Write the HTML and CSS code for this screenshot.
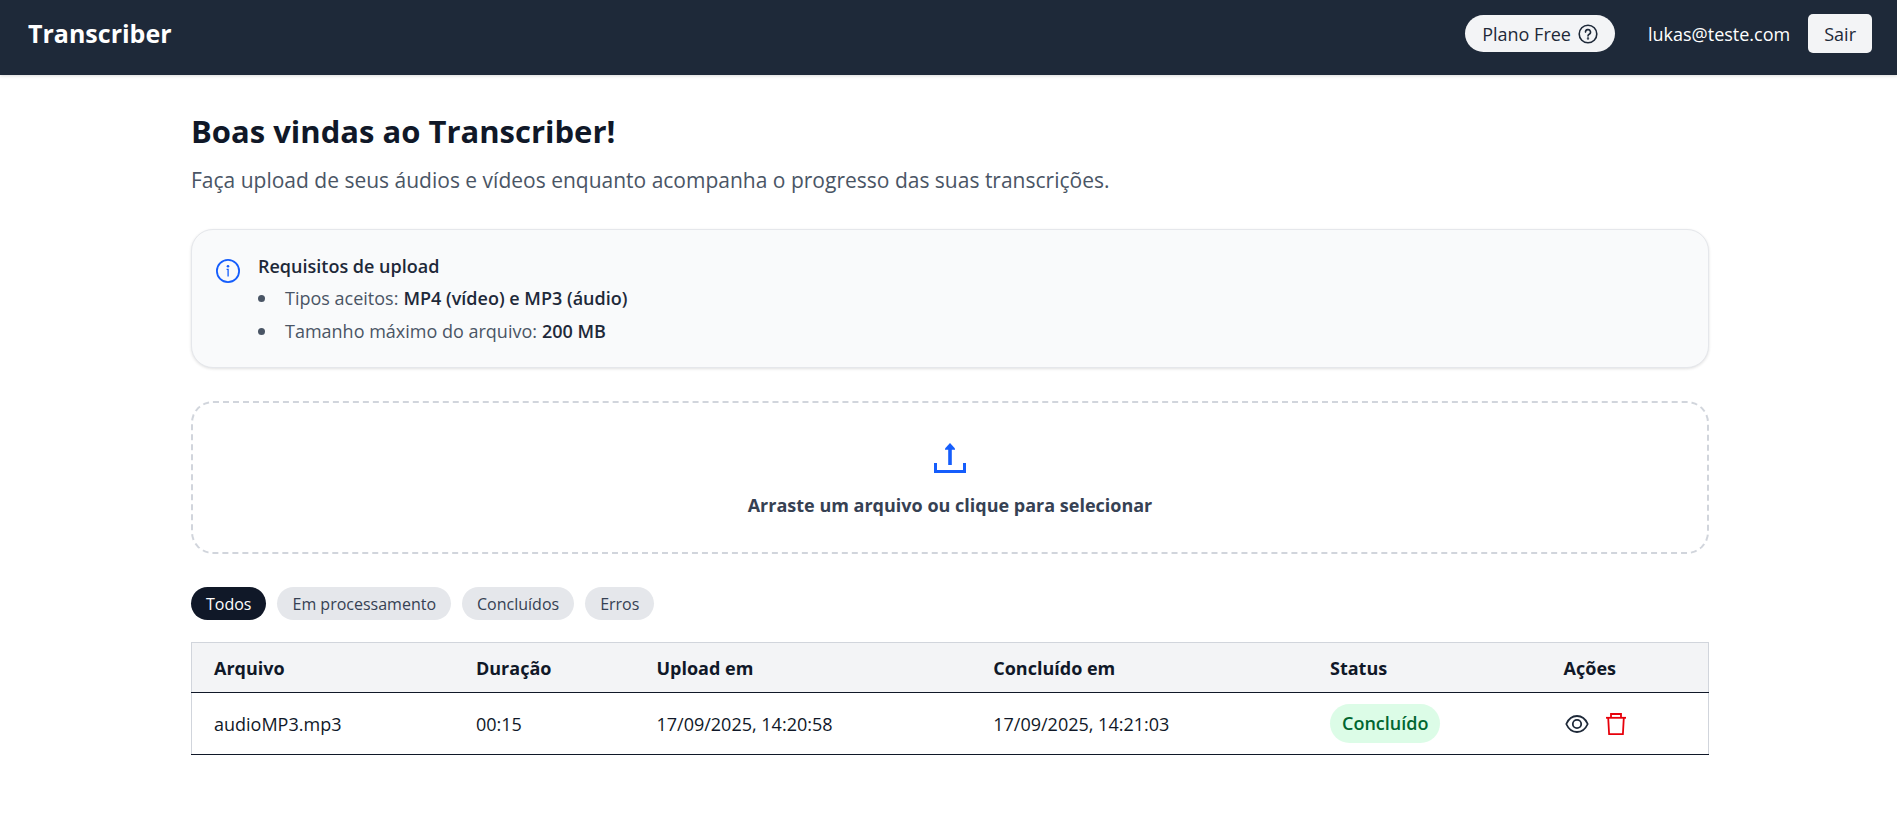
FILE: index.html
```html
<!DOCTYPE html>
<html lang="pt-BR">
<head>
<meta charset="utf-8">
<title>Transcriber</title>
<link rel="stylesheet" href="styles.css">
</head>
<body>
<header class="topbar">
  <div class="brand">Transcriber</div>
  <div class="account">
    <button type="button" class="plan">
      <span>Plano Free</span>
      <svg class="plan-icon" viewBox="0 0 20 20" fill="none" stroke="currentColor" stroke-width="1.6" stroke-linecap="round" aria-hidden="true"><circle cx="10" cy="10" r="8.8"/><path d="M7.5 8.1a2.5 2.5 0 1 1 3.7 2.2c-.8.45-1.2.8-1.2 1.7"/><circle cx="10" cy="14.4" r=".4"/></svg>
    </button>
    <span class="email">lukas@teste.com</span>
    <button type="button" class="logout">Sair</button>
  </div>
</header>
<main class="content">
  <h1 class="title">Boas vindas ao Transcriber!</h1>
  <p class="subtitle">Faça upload de seus áudios e vídeos enquanto acompanha o progresso das suas transcrições.</p>
  <section class="notice">
    <svg class="notice-icon" viewBox="0 0 24 24" fill="none" stroke="currentColor" aria-hidden="true"><circle cx="12" cy="12" r="11.1" stroke-width="1.8"/><path d="M10.6 10.4H12.1V17.6" stroke-width="1.3"/><circle cx="12" cy="7.2" r="1.3" fill="currentColor" stroke="none"/></svg>
    <div>
      <h2 class="notice-title">Requisitos de upload</h2>
      <ul class="notice-list">
        <li>Tipos aceitos: <strong>MP4 (vídeo) e MP3 (áudio)</strong></li>
        <li>Tamanho máximo do arquivo: <strong>200 MB</strong></li>
      </ul>
    </div>
  </section>
  <button type="button" class="dropzone">
    <svg class="drop-icon" viewBox="0 0 36 36" fill="none" stroke="currentColor" stroke-width="3" aria-hidden="true"><path d="M3.500 23v8.500h29V23"/><path d="M18 25V8" stroke-width="3.600"/><path d="M18 3l5 5.500v1.300H13V8.500z" fill="currentColor" stroke="none"/></svg>
    <span>Arraste um arquivo ou clique para selecionar</span>
  </button>
  <nav class="filters" aria-label="Filtros">
    <button type="button" class="filter filter-active">Todos</button>
    <button type="button" class="filter">Em processamento</button>
    <button type="button" class="filter">Concluídos</button>
    <button type="button" class="filter">Erros</button>
  </nav>
  <table class="files">
    <colgroup><col class="col-file"><col class="col-duration"><col class="col-date"><col class="col-date"><col class="col-status"><col></colgroup>
    <thead>
      <tr><th>Arquivo</th><th>Duração</th><th>Upload em</th><th>Concluído em</th><th>Status</th><th>Ações</th></tr>
    </thead>
    <tbody>
      <tr>
        <td>audioMP3.mp3</td><td>00:15</td><td>17/09/2025, 14:20:58</td><td>17/09/2025, 14:21:03</td>
        <td><span class="badge">Concluído</span></td>
        <td>
          <div class="actions">
            <button type="button" class="action" aria-label="Visualizar"><svg viewBox="0 0 26 26" fill="none" stroke="currentColor" stroke-width="1.8" aria-hidden="true"><path d="M2.300 13c2.200-5 6.100-8 10.700-8s8.500 3 10.700 8c-2.200 5-6.100 8-10.700 8S4.500 18 2.300 13z"/><circle cx="13" cy="13" r="4.200"/></svg></button>
            <button type="button" class="action action-delete" aria-label="Excluir"><svg viewBox="0 0 26 26" fill="none" stroke="currentColor" stroke-width="1.800" aria-hidden="true"><path d="M3 6.800h20"/><path d="M8 6.800V3h10v3.800"/><path d="M5.200 6.800l.9 16.400h13.800l.9-16.400"/></svg></button>
          </div>
        </td>
      </tr>
    </tbody>
  </table>
</main>
</body>
</html>
```
FILE: styles.css
```css
*, *::before, *::after { box-sizing: border-box; }
body {
  margin: 0;
  background: #fff;
  color: #101828;
  font: 18px/26px "Segoe UI", "Open Sans", "Noto Sans", sans-serif;
}
button { font: inherit; color: inherit; border: 0; margin: 0; cursor: pointer; }
svg { display: block; flex: none; }
h1, h2, p, ul { margin: 0; padding: 0; }

.topbar {
  display: flex;
  justify-content: space-between;
  align-items: flex-start;
  height: 75px;
  padding: 14px 25px 0 28px;
  background: #1e2939;
  color: #fff;
  box-shadow: 0 1px 3px rgba(0, 0, 0, .15);
}
.brand { font-size: 25px; line-height: 39px; font-weight: 700; }
.account { display: flex; align-items: center; }
.plan {
  display: flex;
  align-items: center;
  gap: 7px;
  height: 37px;
  padding: 0 17px;
  border-radius: 19px;
  background: #f3f4f6;
  color: #1e2939;
}
.plan-icon { width: 20px; height: 20px; }
.email { margin: 0 18px 0 33px; }
.logout { height: 39px; padding: 0 16px; border-radius: 5px; background: #f3f4f6; color: #1e2939; }

.content { padding: 35px 188px 36px 191px; }
.title { font-size: 31px; line-height: 42px; font-weight: 700; }
.subtitle { margin-top: 13px; font-size: 21px; line-height: 30px; color: #4a5565; }

.notice {
  display: flex;
  gap: 18px;
  margin-top: 34px;
  padding: 21px 24px 19px;
  border: 1px solid #e5e7eb;
  border-radius: 22px;
  background: #f9fafb;
  box-shadow: 0 1px 3px rgba(0, 0, 0, .12);
}
.notice-icon { width: 24px; height: 24px; margin-top: 8px; color: #155dfc; }
.notice-title { font-size: 18px; line-height: 31px; font-weight: 600; color: #1e2939; }
.notice-list { list-style: none; color: #4a5565; }
.notice-list li { display: flex; gap: 5px; align-items: center; line-height: 33px; }
.notice-list li::before {
  content: "";
  width: 7px;
  height: 7px;
  margin-right: 15px;
  border-radius: 50%;
  background: #4a5565;
}
.notice-list strong { font-weight: 600; color: #1e2939; }

.dropzone {
  display: flex;
  flex-direction: column;
  align-items: center;
  gap: 16px;
  width: 100%;
  margin-top: 33px;
  padding: 37px 24px 34px;
  border: 2px dashed #d1d5dc;
  border-radius: 22px;
  background: #fff;
  color: #364153;
  font-weight: 700;
}
.drop-icon { width: 36px; height: 36px; color: #155dfc; }

.filters { display: flex; gap: 11px; margin-top: 33px; }
.filter {
  height: 33px;
  padding: 0 15px;
  border-radius: 17px;
  background: #e5e7eb;
  color: #364153;
  font-size: 16px;
}
.filter-active { background: #101828; color: #fff; }

.files {
  width: 100%;
  margin-top: 22px;
  border: 1px solid #d1d5dc;
  border-collapse: collapse;
  table-layout: fixed;
}
.col-file { width: 17.3%; }
.col-duration { width: 11.9%; }
.col-date { width: 22.2%; }
.col-status { width: 15.4%; }
.files tr { border-bottom: 1px solid #101828; }
.files thead { background: #f3f4f6; }
.files th { padding: 12px 22px 11px; text-align: left; font-weight: 700; }
.files td { padding: 11px 22px; }
.badge {
  display: inline-block;
  padding: 0 12px;
  border-radius: 20px;
  background: #dcfce7;
  color: #016630;
  line-height: 39px;
  font-weight: 600;
}
.actions { display: flex; gap: 13px; }
.action { width: 26px; height: 26px; padding: 0; background: none; color: #1e2939; }
.action-delete { color: #e7000b; }
```
